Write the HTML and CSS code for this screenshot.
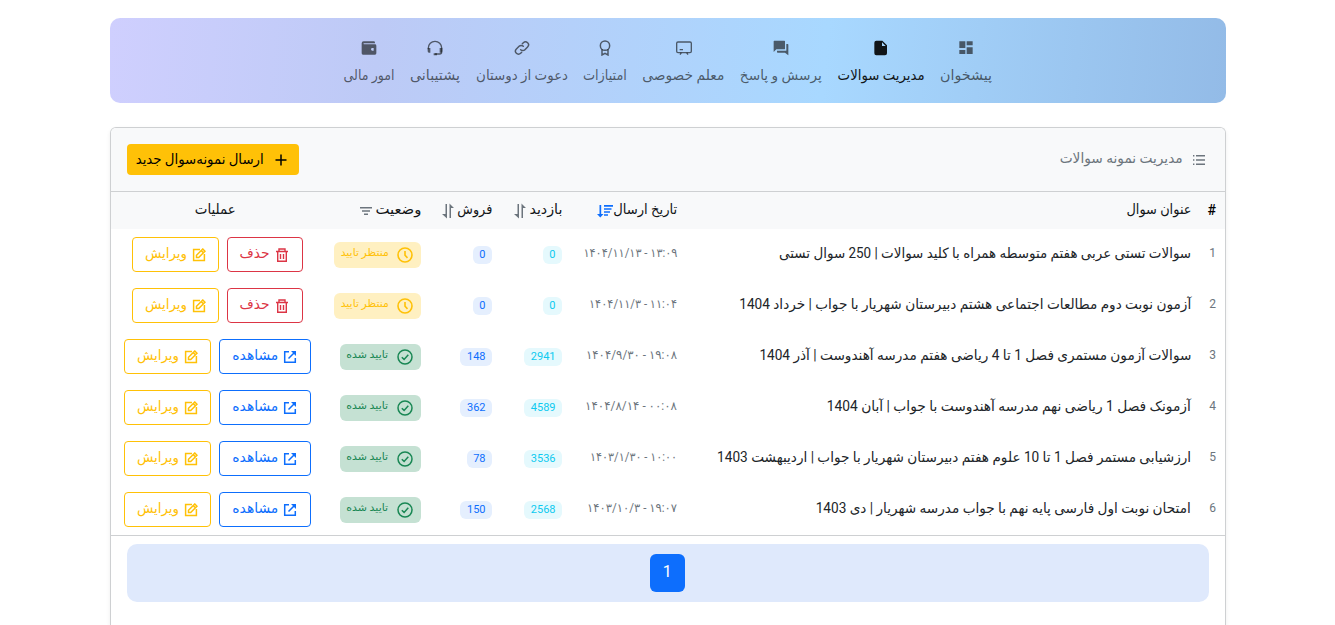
FILE: index.html
```html
<!DOCTYPE html>
<html lang="fa" dir="rtl">
<head>
<meta charset="utf-8">
<title>مدیریت نمونه سوالات</title>
<link rel="stylesheet" href="styles.css">
</head>
<body>
<svg class="sprite" aria-hidden="true">
  <symbol id="grid" viewBox="0 0 24 24"><path fill="currentColor" d="M2 2h9v10H2zM13 2h9v6h-9zM2 15h9v6H2zM13 11h9v10h-9z"/></symbol>
  <symbol id="file" viewBox="0 0 24 24"><path fill="currentColor" fill-rule="evenodd" d="M5 1h9l7 7v12q0 3-3 3H5q-3 0-3-3V4q0-3 3-3zm8.500 2.500V9H19z"/></symbol>
  <symbol id="chat" viewBox="0 0 24 24"><path fill="currentColor" d="M2 1h15a1 1 0 0 1 1 1v11a1 1 0 0 1-1 1H5l-4 4V2a1 1 0 0 1 1-1zM20 6h2a1 1 0 0 1 1 1v16l-5-4H7a1 1 0 0 1-1-1v-2h14z"/></symbol>
  <symbol id="board" viewBox="0 0 24 24"><g fill="none" stroke="currentColor" stroke-width="2"><rect x="1" y="3" width="22" height="16" rx="2"/><path d="M8 19l-2 3M16 19l2 3M5.500 14.500h5"/></g></symbol>
  <symbol id="award" viewBox="0 0 24 24"><g fill="none" stroke="currentColor" stroke-width="2.200"><circle cx="12" cy="8.500" r="7"/><path d="M7.500 14v8.500l4.500-2.500 4.500 2.500V14"/></g></symbol>
  <symbol id="link" viewBox="0 0 24 24"><g fill="none" stroke="currentColor" stroke-width="2.200" stroke-linecap="round"><path d="M10 14.500a4.500 4.500 0 0 0 6.400 0l4-4a4.500 4.500 0 0 0-6.400-6.400l-1.500 1.500"/><path d="M14 9.500a4.500 4.500 0 0 0-6.400 0l-4 4a4.500 4.500 0 0 0 6.400 6.400l1.500-1.500"/></g></symbol>
  <symbol id="headset" viewBox="0 0 24 24"><path fill="none" stroke="currentColor" stroke-width="2" d="M2 14v-2a10 10 0 0 1 20 0v6q0 3-3 3h-7"/><path fill="currentColor" d="M1 12h4v7H3q-2 0-2-2zM19 12h4v5q0 2-2 2h-2zM10 20h5v3h-5z"/></symbol>
  <symbol id="wallet" viewBox="0 0 24 24"><path fill="currentColor" fill-rule="evenodd" d="M4 2h15q2 0 2 2v1H4.500q-1 0-1 .7t1 .8H21q2 0 2 2V20q0 2-2 2H3q-2 0-2-2V5q0-3 3-3zm13 10a2 2 0 0 0 0 4h2v-4z"/></symbol>
  <symbol id="list" viewBox="0 0 14 12"><path fill="currentColor" d="M4 1h9v1.400H4zM4 5.300h9v1.400H4zM4 9.600h9V11H4zM1 1h1.400v1.400H1zM1 5.300h1.400v1.400H1zM1 9.600h1.400V11H1z"/></symbol>
  <symbol id="plus" viewBox="0 0 12 12"><path fill="none" stroke="currentColor" stroke-width="1.500" d="M6 .5v11M.5 6h11"/></symbol>
  <symbol id="updown" viewBox="0 0 12 16"><path fill="currentColor" d="M3.500 1H5v14.500L0 11h3.500zM7.500 .5 12 5H9v10H7.500z"/></symbol>
  <symbol id="sortdown" viewBox="0 0 16 14"><path fill="currentColor" d="M2.500 1h1.700v9H6.500L3.300 13.500 0 10h2.500zM7 1h9v1.800H7zM7 4.200h7.500v1.600H7zM7 7.200h6v1.600H7zM7 10.200h4v1.600H7z"/></symbol>
  <symbol id="filter" viewBox="0 0 14 10"><path fill="currentColor" d="M1 1h12v1.500H1zM3 4.200h8v1.500H3zM5 7.500h4V9H5z"/></symbol>
  <symbol id="clock" viewBox="0 0 16 16"><g fill="none" stroke="currentColor" stroke-width="1.600"><circle cx="8" cy="8" r="7"/><path d="M8 4V8.300l2.500 2.600"/></g></symbol>
  <symbol id="check" viewBox="0 0 16 16"><g fill="none" stroke="currentColor" stroke-width="1.500"><circle cx="8" cy="8" r="7"/><path d="M4.800 8.200l2.300 2.200 4.200-4.600"/></g></symbol>
  <symbol id="trash" viewBox="0 0 14 14"><path fill="none" stroke="currentColor" stroke-width="1.400" d="M1 3.500h12M4 3.500V1h6v2.500M2.700 3.500v9.800h8.600V3.500M5.500 6v5M8.500 6v5"/></symbol>
  <symbol id="edit" viewBox="0 0 14 14"><path fill="none" stroke="currentColor" stroke-width="1.500" d="M8 1.600H1.600v10.800h10.800V6M4.500 9.500V7.300L10.800 1 13 3.200 6.700 9.500zM9.200 2.600l2.200 2.200"/></symbol>
  <symbol id="open" viewBox="0 0 14 14"><path fill="none" stroke="currentColor" stroke-width="1.500" d="M6 1.700H1.700v10.600h10.600V8M5.500 8.500l6-6"/><path fill="currentColor" d="M8 1h5v5z"/></symbol>
</svg>
<div class="page">
<nav class="nav">
  <a class="tab"><svg><use href="#grid"/></svg><span class="fit" data-w="52">پیشخوان</span></a>
  <a class="tab active"><svg><use href="#file"/></svg><span class="fit" data-w="87">مدیریت سوالات</span></a>
  <a class="tab"><svg><use href="#chat"/></svg><span class="fit" data-w="82">پرسش و پاسخ</span></a>
  <a class="tab"><svg><use href="#board"/></svg><span class="fit" data-w="82">معلم خصوصی</span></a>
  <a class="tab"><svg><use href="#award"/></svg><span class="fit" data-w="44">امتیازات</span></a>
  <a class="tab"><svg><use href="#link"/></svg><span class="fit" data-w="92">دعوت از دوستان</span></a>
  <a class="tab"><svg><use href="#headset"/></svg><span class="fit" data-w="50">پشتیبانی</span></a>
  <a class="tab"><svg><use href="#wallet"/></svg><span class="fit" data-w="51">امور مالی</span></a>
</nav>
<main class="card">
  <header class="card-header">
    <h1 class="title"><svg><use href="#list"/></svg><span class="fit" data-w="123">مدیریت نمونه سوالات</span></h1>
    <a class="new"><svg><use href="#plus"/></svg><span class="fit" data-w="128">ارسال نمونه‌سوال جدید</span></a>
  </header>
  <div class="row head">
    <div class="num">#</div>
    <div><span class="fit" data-w="65">عنوان سوال</span></div>
    <div><span class="fit" data-w="64">تاریخ ارسال</span><svg class="sort"><use href="#sortdown"/></svg></div>
    <div><span class="fit" data-w="33">بازدید</span><svg class="updown"><use href="#updown"/></svg></div>
    <div><span class="fit" data-w="35">فروش</span><svg class="updown"><use href="#updown"/></svg></div>
    <div><span class="fit" data-w="46">وضعیت</span><svg class="filter"><use href="#filter"/></svg></div>
    <div class="center"><span class="fit" data-w="41">عملیات</span></div>
  </div>
  <div id="rows"></div>
  <footer class="card-footer"><div class="pager"><a class="current">1</a></div></footer>
</main>
</div>
<script src="app.js"></script>
</body>
</html>
```
FILE: styles.css
```css
* { box-sizing: border-box; }
body { margin: 0; height: 625px; overflow: hidden; background: #fff; color: #212529; font: 14px/20px Roboto, "DejaVu Sans", sans-serif; }
.sprite { display: none; }
.page { display: flex; flex-direction: column; gap: 24px; height: 625px; margin: 0 109px 0 110px; padding-top: 18px; }
.fit { display: inline-block; flex: none; white-space: nowrap; }
.fit > span { display: inline-block; transform-origin: right center; }
.nav { display: flex; flex: none; justify-content: center; gap: 15.500px; height: 85px; padding-top: 22px; border-radius: 10px; background: linear-gradient(95deg, #cfcffe 0%, #bdcaf6 24%, #a8d8ff 64%, #93bbe7 100%); }
.tab { display: flex; flex-direction: column; align-items: center; gap: 9px; color: rgba(33, 37, 41, .7); }
.tab.active { color: #111518; }
.tab svg { width: 16px; height: 16px; }
.card { flex: 1; border: 1px solid #ced0d2; border-bottom: 0; border-radius: 6px 6px 0 0; background: #fff; box-shadow: 0 2px 4px rgba(0, 0, 0, .075); }
.card-header { display: flex; justify-content: space-between; height: 64px; padding: 16px; border-bottom: 1px solid #ced0d2; border-radius: 5px 5px 0 0; background: #f8f9fa; }
.title { display: flex; align-items: center; gap: 9px; height: 30px; margin: 0; padding-right: 3px; color: #6c757d; font-size: 14px; font-weight: 400; }
.title svg { width: 14px; height: 12px; margin-top: 1px; }
.title .fit { margin-top: -3px; }
.new { display: flex; align-items: center; gap: 11px; height: 31px; padding: 0 12.500px 0 8.500px; border-radius: 4px; background: #ffc107; color: #000; }
.new svg { width: 12px; height: 12px; margin-top: 1px; }
.row { display: grid; grid-template-columns: 26px 514px 115px 70px 71px 110px 208px; height: 51px; align-items: center; }
.row > div { display: flex; align-items: center; padding: 0 8px; }
.row > .center { justify-content: center; padding: 0; }
.row > .num { padding-right: 9px; }
.head { height: 37px; background: #f8f9fa; color: #111518; }
.head svg { flex: none; color: #6c757d; }
.head .sort { width: 16px; height: 14px; color: #0d6efd; }
.head .updown { width: 12px; height: 16px; margin-right: 3px; }
.head .filter { width: 14px; height: 10px; margin-right: 2px; }
.num { margin-top: -3px; color: #6c757d; font-size: 12px; }
.head .num { margin-top: -2px; color: #000; font-size: 14px; font-weight: 500; }
.date { color: #6c757d; font-size: 12px; }
.count { height: 18px; padding: 0 6.500px; border-radius: 6px; font-size: 11px; line-height: 17px; }
.count.views { background: #e5f9fd; color: #0dcaf0; }
.count.sales { background: #e5effe; color: #0d6efd; }
.status { display: flex; align-items: center; gap: 8px; height: 26px; padding: 0 8.500px 0 6.500px; border-radius: 6px; font-size: 10.500px; }
.status svg { flex: none; width: 16px; height: 16px; }
.status.pending { background: #fff0c1; color: #ffc107; }
.status.approved { background: #c5e1d3; color: #198754; }
.row > .actions { justify-content: center; gap: 8px; padding: 0 0 0 5px; }
.btn { display: flex; align-items: center; gap: 5px; height: 35px; padding: 0 13px 0 12px; border: 1px solid; border-radius: 4px; }
.btn svg { width: 14px; height: 14px; margin-top: 1px; }
.btn.red { color: #dc3545; }
.btn.blue { color: #0d6efd; }
.btn.yellow { padding: 0 12px 0 12px; color: #ffc107; }
.card-footer { padding: 8px 16px; border-top: 1px solid #ced0d2; }
.pager { display: flex; align-items: center; justify-content: center; height: 58px; padding-left: 0; padding-right: 1.500px; border-radius: 10px; background: #dfe9fc; }
.current { width: 35px; height: 38px; border-radius: 6px; background: #0d6efd; color: #fff; font-size: 16px; line-height: 36px; text-align: center; }
.row .fit, .btn .fit, .status .fit { margin-top: -3px; }
.new .fit { margin-top: -2px; }
```
FILE: app.js
```js
// [title, title width, time, day, date width, views, sales, approved]
const questions = [
  ["سوالات تستی عربی هفتم متوسطه همراه با کلید سوالات | 250 سوال تستی", 412, "۱۳:۰۹", "۱۴۰۴/۱۱/۱۳", 94, 0, 0, false],
  ["آزمون نوبت دوم مطالعات اجتماعی هشتم دبیرستان شهریار با جواب | خرداد 1404", 452, "۱۱:۰۴", "۱۴۰۴/۱۱/۳", 88, 0, 0, false],
  ["سوالات آزمون مستمری فصل 1 تا 4 ریاضی هفتم مدرسه آهندوست | آذر 1404", 432, "۱۹:۰۸", "۱۴۰۴/۹/۳۰", 91, 2941, 148, true],
  ["آزمونک فصل 1 ریاضی نهم مدرسه آهندوست با جواب | آبان 1404", 364, "۰۰:۰۸", "۱۴۰۴/۸/۱۴", 92, 4589, 362, true],
  ["ارزشیابی مستمر فصل 1 تا 10 علوم هفتم دبیرستان شهریار با جواب | اردیبهشت 1403", 474, "۱۰:۰۰", "۱۴۰۳/۱/۳۰", 87, 3536, 78, true],
  ["امتحان نوبت اول فارسی پایه نهم با جواب مدرسه شهریار | دی 1403", 375, "۱۹:۰۷", "۱۴۰۳/۱۰/۳", 90, 2568, 150, true]
];

const icon = name => `<svg><use href="#${name}"/></svg>`;
const fit = (text, width) => `<span class="fit" data-w="${width}">${text}</span>`;
const button = (color, name, text, width) => `<a class="btn ${color}">${icon(name)}${fit(text, width)}</a>`;

document.getElementById("rows").innerHTML = questions.map(([title, titleWidth, time, day, dateWidth, views, sales, ok], i) => `
  <div class="row">
    <div class="num">${i + 1}</div>
    <div>${fit(title, titleWidth)}</div>
    <div class="date">${fit(`${time} - <bdi dir="ltr">${day}</bdi>`, dateWidth)}</div>
    <div><span class="count views">${views}</span></div>
    <div><span class="count sales">${sales}</span></div>
    <div><span class="status ${ok ? "approved" : "pending"}">${icon(ok ? "check" : "clock")}${ok ? fit("تایید شده", 42) : fit("منتظر تایید", 48)}</span></div>
    <div class="actions">${ok ? button("blue", "open", "مشاهده", 46) : button("red", "trash", "حذف", 30)}${button("yellow", "edit", "ویرایش", 42)}</div>
  </div>`).join("");

document.querySelectorAll(".fit").forEach(el => {
  const inner = document.createElement("span");
  inner.append(...el.childNodes);
  el.append(inner);
  const scale = el.dataset.w / inner.getBoundingClientRect().width;
  el.style.width = el.dataset.w + "px";
  inner.style.transform = `scaleX(${scale})`;
});
```
